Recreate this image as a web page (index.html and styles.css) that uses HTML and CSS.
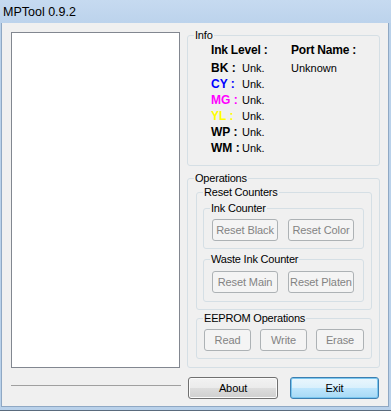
FILE: index.html
```html
<!DOCTYPE html>
<html>
<head>
<meta charset="utf-8">
<title>MPTool 0.9.2</title>
<link rel="stylesheet" href="styles.css">
</head>
<body>
<div class="window">
  <div class="titlebar">MPTool 0.9.2</div>
  <div class="client">
    <div class="left">
      <div class="listbox"></div>
      <div class="sep"></div>
    </div>
    <div class="right">
      <fieldset class="group info">
        <legend>Info</legend>
        <div class="info-grid">
          <div class="hdr span2">Ink Level :</div>
          <div class="hdr">Port Name :</div>
          <div class="lbl bk">BK :</div><div class="val">Unk.</div><div class="val">Unknown</div>
          <div class="lbl cy">CY :</div><div class="val">Unk.</div><div></div>
          <div class="lbl mg">MG :</div><div class="val">Unk.</div><div></div>
          <div class="lbl yl">YL :</div><div class="val">Unk.</div><div></div>
          <div class="lbl wp">WP :</div><div class="val">Unk.</div><div></div>
          <div class="lbl wm">WM :</div><div class="val">Unk.</div><div></div>
        </div>
      </fieldset>
      <fieldset class="group ops">
        <legend>Operations</legend>
        <div class="ops-body">
          <fieldset class="group reset">
            <legend>Reset Counters</legend>
            <div class="reset-body">
              <fieldset class="group inner">
                <legend>Ink Counter</legend>
                <div class="btn-row first">
                  <button class="btn dis w66">Reset Black</button>
                  <button class="btn dis w66">Reset Color</button>
                </div>
              </fieldset>
              <fieldset class="group inner waste">
                <legend>Waste Ink Counter</legend>
                <div class="btn-row second">
                  <button class="btn dis w66">Reset Main</button>
                  <button class="btn dis w66">Reset Platen</button>
                </div>
              </fieldset>
            </div>
          </fieldset>
          <fieldset class="group eeprom">
            <legend>EEPROM Operations</legend>
            <div class="btn-row eep">
              <button class="btn dis w47">Read</button>
              <button class="btn dis w47">Write</button>
              <button class="btn dis w48">Erase</button>
            </div>
          </fieldset>
        </div>
      </fieldset>
      <div class="actions">
        <button class="btn about">About</button>
        <button class="btn default exit">Exit</button>
      </div>
    </div>
  </div>
</div>
</body>
</html>
```
FILE: styles.css
```css
html, body {
  margin: 0;
  padding: 0;
}
body {
  width: 391px;
  height: 411px;
  overflow: hidden;
  font-family: "Liberation Sans", Arial, sans-serif;
  font-size: 11px;
  color: #000;
}
.window {
  width: 391px;
  height: 411px;
  box-sizing: border-box;
  background: #b9d1ea;
  display: flex;
  flex-direction: column;
  border-bottom: 1px solid #5a6b7d;
}
.titlebar {
  height: 23px;
  box-sizing: border-box;
  padding: 2px 0 0 3px;
  line-height: 21px;
  font-size: 12.5px;
  background: linear-gradient(#c6daf0, #bcd3ec);
  color: #000;
  flex: none;
}
.client {
  flex: 1;
  margin: 0 2px 3px 1px;
  border: 1px solid #8fa8c4;
  border-top: none;
  background: #f0f0f0;
  display: flex;
  gap: 7px;
  padding: 0 0 0 9px;
}
.left {
  width: 169px;
  padding-top: 9px;
  display: flex;
  flex-direction: column;
}
.listbox {
  height: 336px;
  box-sizing: border-box;
  border: 1px solid #828790;
  background: #fff;
}
.sep {
  margin-top: 17px;
  width: 170px;
  height: 1px;
  background: #a0a0a0;
}
.right {
  width: 193px;
  padding-top: 6px;
  display: flex;
  flex-direction: column;
}
.group {
  margin: 0;
  padding: 0;
  border: 1px solid #d5dfe5;
  border-radius: 3px;
  min-width: 0;
}
.group > legend {
  padding: 0 1px;
  margin-left: 6px;
  font-size: 11px;
  line-height: 13px;
  letter-spacing: -0.2px;
}
.info {
  height: 137px;
  box-sizing: border-box;
}
.info-grid {
  display: grid;
  grid-template-columns: 31px 49px auto;
  grid-auto-rows: 16px;
  padding-left: 23px;
  line-height: 16px;
}
.hdr {
  font-weight: bold;
  font-size: 12px;
  letter-spacing: -0.2px;
  margin-bottom: 2px;
  height: 18px;
}
.span2 {
  grid-column: span 2;
}
.info-grid .hdr {
  line-height: 16px;
}
.info-grid {
  grid-template-rows: 18px;
}
.lbl {
  font-weight: bold;
  font-size: 12px;
  white-space: nowrap;
}
.val {
  font-size: 11px;
}
.bk, .wp, .wm { color: #000; }
.cy { color: #0000ff; }
.mg { color: #ff00ff; }
.yl { color: #ffff00; }

.ops {
  margin-top: 6px;
}
.ops-body {
  padding: 1px 7px 8px 8px;
}
.reset-body {
  padding: 3px 7px 7px 6px;
}
.waste {
  margin-top: 4px;
}
.btn-row {
  display: flex;
  gap: 10px;
  padding-left: 8px;
}
.btn-row.first {
  padding-top: 4px;
  padding-bottom: 7px;
}
.btn-row.second {
  padding-top: 5px;
  padding-bottom: 8px;
}
.eeprom {
  margin-top: 2px;
}
.btn-row.eep {
  gap: 9px;
  padding: 4px 0 7px 7px;
}
.btn {
  box-sizing: border-box;
  height: 22px;
  margin: 0;
  padding: 0;
  border: 1px solid #707070;
  border-radius: 3px;
  background: linear-gradient(#f2f2f2 0%, #ebebeb 50%, #dddddd 50%, #cfcfcf 100%);
  box-shadow: inset 0 0 0 1px #fbfbfb;
  font-family: "Liberation Sans", Arial, sans-serif;
  font-size: 11px;
  color: #000;
  letter-spacing: -0.1px;
}
.btn.dis {
  border-color: #adb2b5;
  background: #f4f4f4;
  box-shadow: none;
  color: #838383;
}
.w66 { width: 66px; }
.w47 { width: 47px; }
.w48 { width: 48px; }
.actions {
  margin-top: 9px;
  display: flex;
  gap: 12px;
  padding-left: 1px;
}
.about {
  width: 90px;
}
.exit {
  width: 89px;
}
.btn.default {
  border-color: #3c7fb1;
  background: linear-gradient(#eaf6fd 0%, #d9f0fc 50%, #bee6fd 50%, #a7d9f5 100%);
  box-shadow: inset 0 0 0 1px #7bc7ef;
}
```
